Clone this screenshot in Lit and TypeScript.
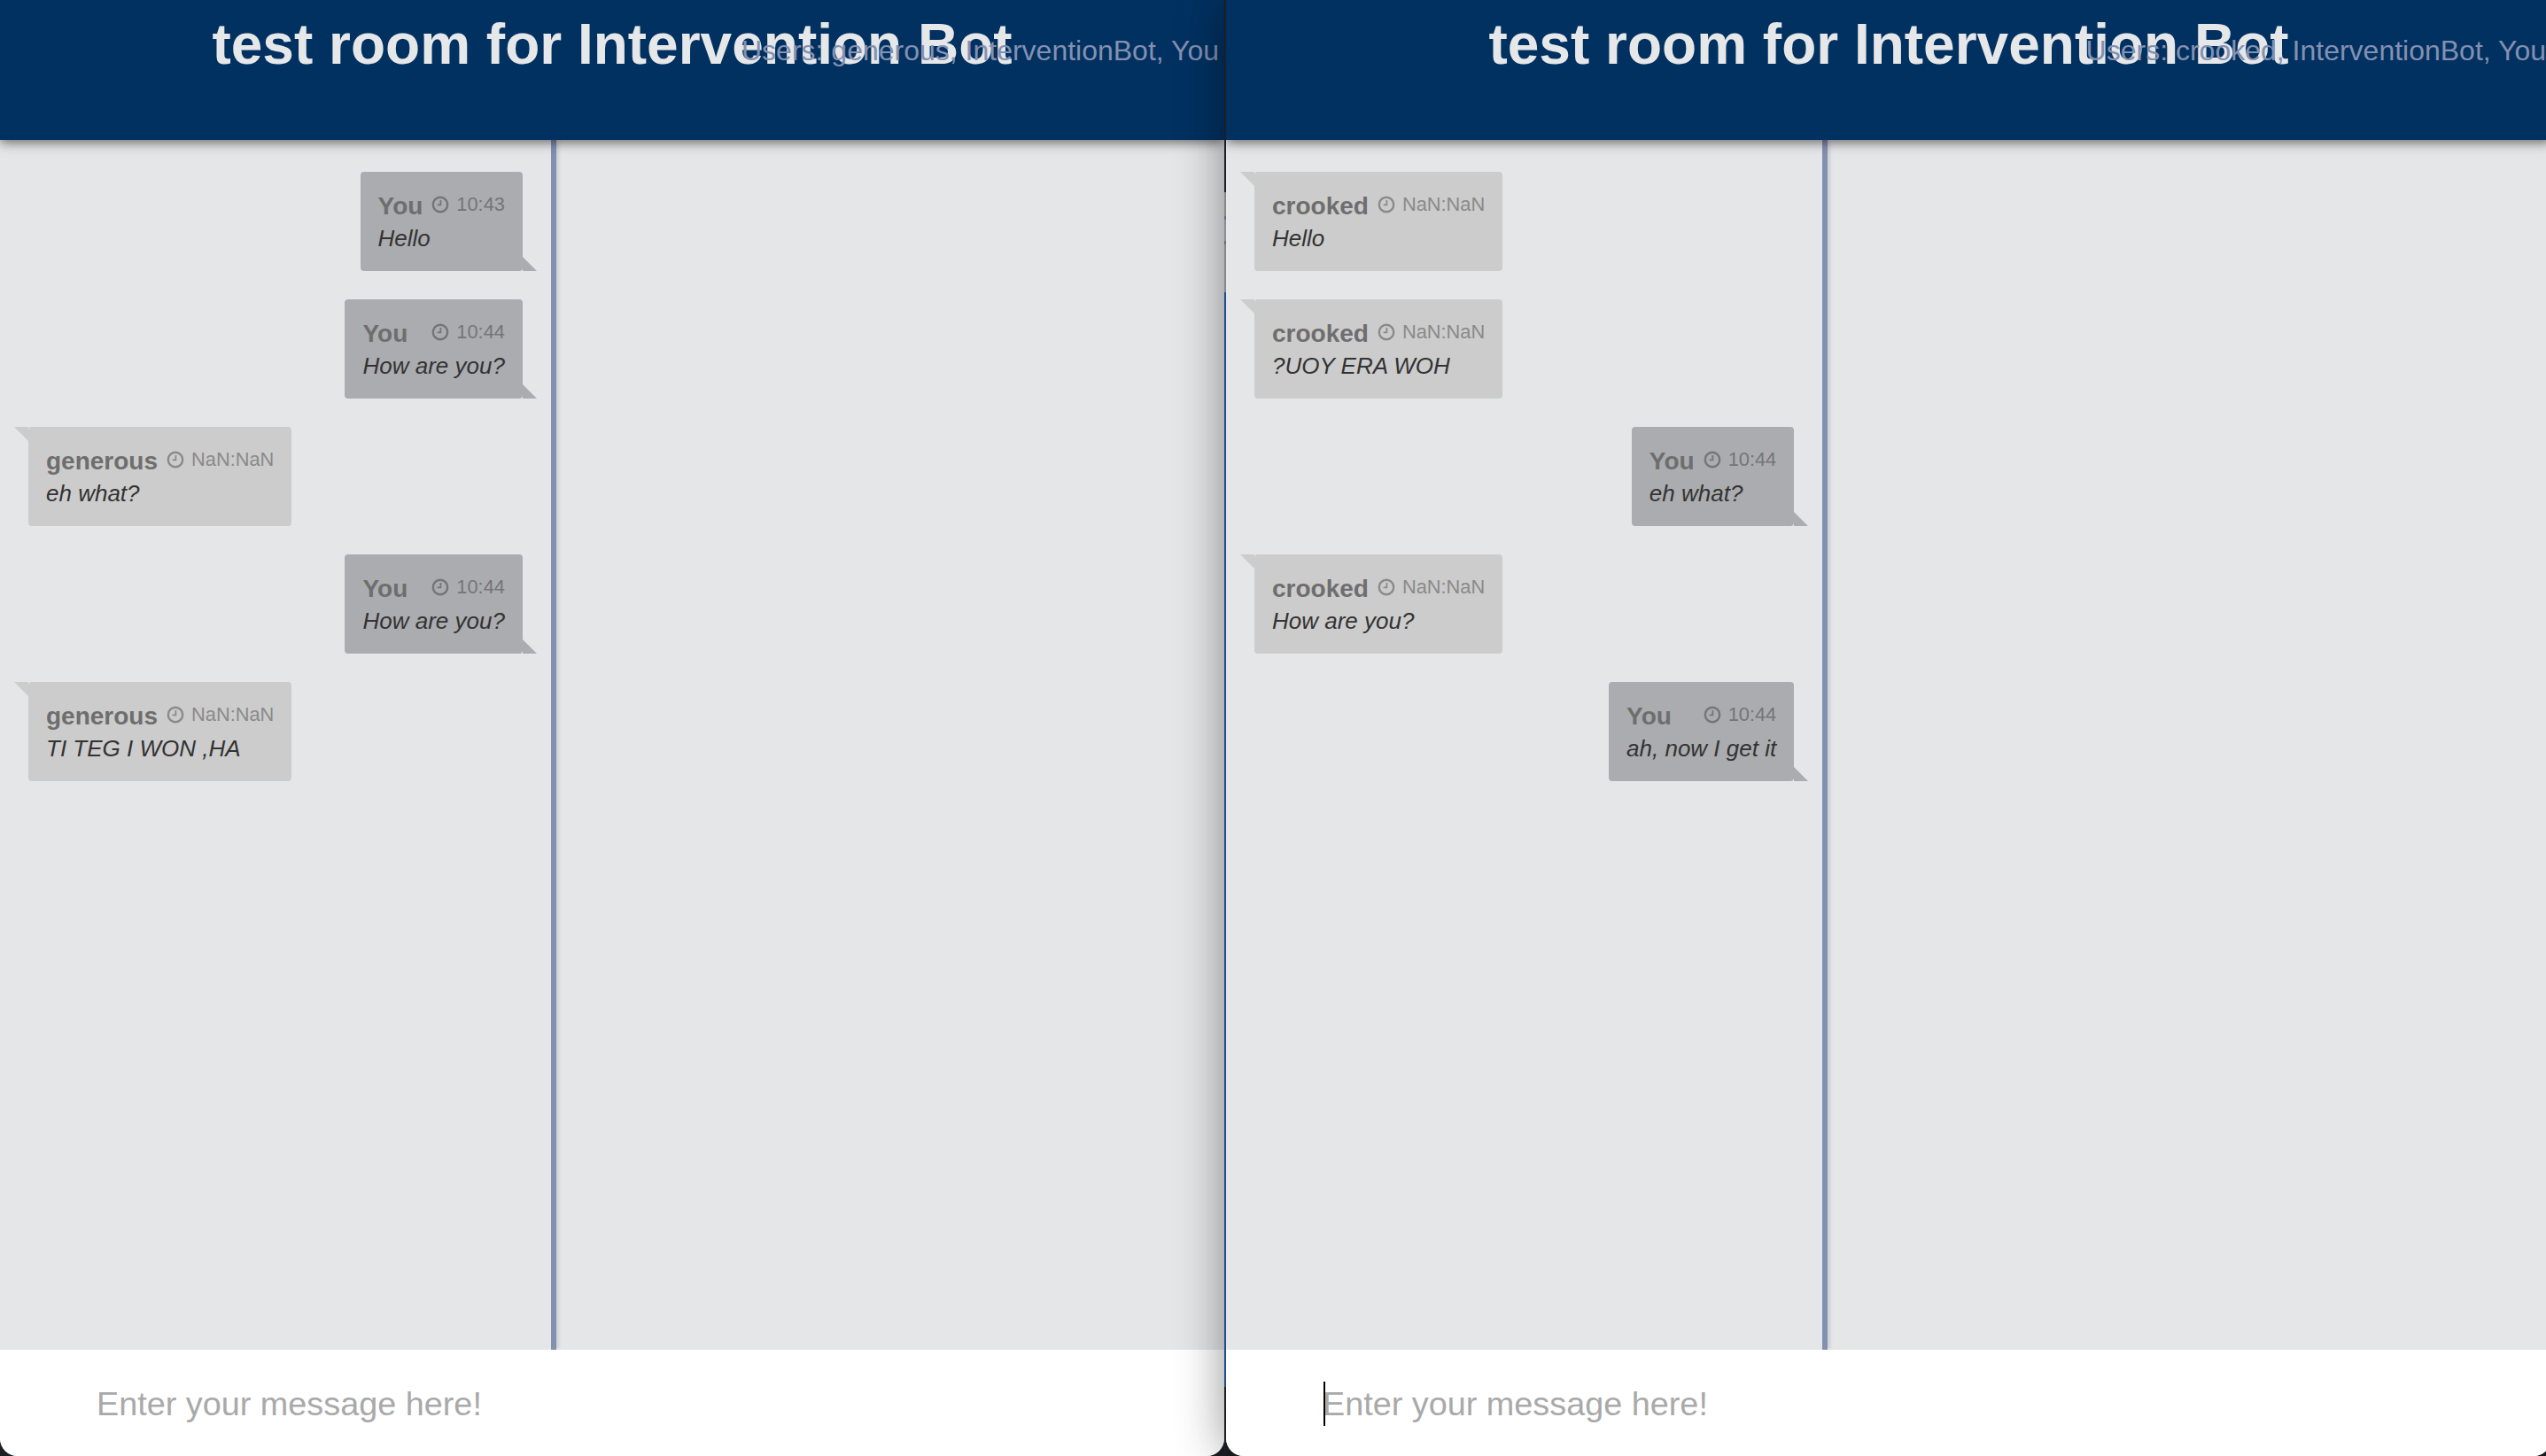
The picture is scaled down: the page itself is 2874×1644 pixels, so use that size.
import { LitElement, html, css, svg } from 'lit'
import { customElement, property } from 'lit/decorators.js'

type Msg = { name: string; time: string; text: string; own?: boolean }

const you = (time: string, text: string): Msg => ({ name: 'You', time, text, own: true })

const leftMsgs: Msg[] = [
	you('10:43', 'Hello'),
	you('10:44', 'How are you?'),
	{ name: 'generous', time: 'NaN:NaN', text: 'eh what?' },
	you('10:44', 'How are you?'),
	{ name: 'generous', time: 'NaN:NaN', text: 'TI TEG I WON ,HA' },
]

const rightMsgs: Msg[] = [
	{ name: 'crooked', time: 'NaN:NaN', text: 'Hello' },
	{ name: 'crooked', time: 'NaN:NaN', text: '?UOY ERA WOH' },
	you('10:44', 'eh what?'),
	{ name: 'crooked', time: 'NaN:NaN', text: 'How are you?' },
	you('10:44', 'ah, now I get it'),
]

const clock = svg`<svg class="clock" viewBox="0 0 20 20">
	<circle cx="10" cy="10" r="8.2" fill="none" stroke="currentColor" stroke-width="2.4" />
	<path d="M10.4 5v5.4H6.6" fill="none" stroke="currentColor" stroke-width="1.8" />
</svg>`

@customElement('chat-window')
class ChatWindow extends LitElement {
	@property() users = ''
	@property({ type: Array }) messages: Msg[] = []
	@property({ type: Boolean }) caret = false

	static styles = css`
		:host {
			display: flex;
			flex-direction: column;
			position: relative;
			height: 100%;
			overflow: hidden;
			border-radius: 0 0 20px 20px;
			background: #e5e6e8;
			font-family: 'Liberation Sans', Arial, sans-serif;
		}

		.head {
			position: relative;
			z-index: 1;
			flex: none;
			height: 158px;
			background: #003161;
			box-shadow: 0 3px 12px rgba(0, 0, 0, 0.55);
			text-align: center;
		}

		h1 {
			margin: 0;
			padding-top: 13px;
			font-size: 64px;
			line-height: 74px;
			font-weight: 700;
			color: #e6e7e8;
		}

		.users {
			position: absolute;
			top: 37px;
			right: 6px;
			font-size: 32px;
			line-height: 40px;
			color: #8490b0;
			white-space: nowrap;
		}

		.body {
			flex: 1;
			display: grid;
			grid-template-columns: calc(45% + 6px) 1fr;
			min-height: 0;
		}

		.log {
			display: flex;
			flex-direction: column;
			gap: 32px;
			padding: 36px 32px 0 32px;
			border-right: 6px solid #8490b0;
			box-shadow: 4px 0 3px -1px rgba(132, 144, 176, 0.25);
		}

		.msg {
			position: relative;
			box-sizing: border-box;
			height: 112px;
			padding: 22px 20px 0;
			border-radius: 4px;
			align-self: flex-start;
			background: #cccccc;
			color: #6e6e6e;
		}

		.msg::after {
			content: '';
			position: absolute;
			top: 0;
			left: -16px;
			border-top: 16px solid #cccccc;
			border-left: 16px solid transparent;
		}

		.msg.own {
			align-self: flex-end;
			background: #abacaf;
		}

		.msg.own::after {
			top: auto;
			left: auto;
			bottom: 0;
			right: -16px;
			border-top: 0;
			border-left: 0;
			border-bottom: 16px solid #abacaf;
			border-right: 16px solid transparent;
		}

		.top {
			display: flex;
			justify-content: space-between;
			gap: 10px;
		}

		.name {
			font-size: 28px;
			line-height: 34px;
			font-weight: 700;
		}

		.time {
			display: flex;
			align-items: center;
			height: 30px;
			gap: 8px;
			font-size: 21.8px;
			color: #8a8a8a;
		}

		.own .time {
			color: #747578;
		}

		.clock {
			width: 20px;
			height: 20px;
		}

		.text {
			margin-top: 1px;
			font-size: 26px;
			line-height: 36px;
			font-style: italic;
			color: #333333;
			white-space: nowrap;
		}

		.input {
			flex: none;
			display: flex;
			align-items: center;
			box-sizing: border-box;
			height: 120px;
			padding: 3px 0 0 109px;
			background: #ffffff;
			font-size: 37.8px;
			color: #a9a9a9;
		}

		.input span {
			position: relative;
		}

		.input.caret span::before {
			content: '';
			position: absolute;
			top: -4px;
			bottom: -3px;
			left: 1px;
			width: 2px;
			background: #000000;
		}
	`

	render() {
		return html`
			<div class="head">
				<h1>test room for Intervention Bot</h1>
				<div class="users">Users: ${this.users}, InterventionBot, You</div>
			</div>
			<div class="body">
				<div class="log">
					${this.messages.map(
						(m) => html`
							<div class="msg ${m.own ? 'own' : ''}">
								<div class="top">
									<span class="name">${m.name}</span>
									<span class="time">${clock}${m.time}</span>
								</div>
								<div class="text">${m.text}</div>
							</div>
						`,
					)}
				</div>
				<div></div>
			</div>
			<div class="input ${this.caret ? 'caret' : ''}"><span>Enter your message here!</span></div>
		`
	}
}

@customElement('app-root')
class AppRoot extends LitElement {
	static styles = css`
		:host {
			display: block;
			height: 1644px;
			overflow: hidden;
			background: #1b1e23;
		}

		.desk {
			display: grid;
			grid-template-columns: 1382px 2px 1496px;
			height: 100%;
			width: 2880px;
		}

		/* the strip of desktop that shows between the two windows */
		.seam {
			z-index: 2;
			background: linear-gradient(
				#1b1e23 0 217px,
				#85878a 217px 244px,
				#6a6c70 244px 248px,
				#8b8d90 248px 272px,
				#6a6c70 272px 276px,
				#85878a 276px 330px,
				#1f4a8c 330px 1566px,
				#1b1e23 1566px
			);
		}

		.second {
			box-shadow: 0 0 55px rgba(0, 0, 0, 0.45);
			z-index: 1;
		}
	`

	render() {
		return html`
			<div class="desk">
				<chat-window users="generous" .messages=${leftMsgs}></chat-window>
				<div class="seam"></div>
				<chat-window class="second" users="crooked" .messages=${rightMsgs} caret></chat-window>
			</div>
		`
	}
}
